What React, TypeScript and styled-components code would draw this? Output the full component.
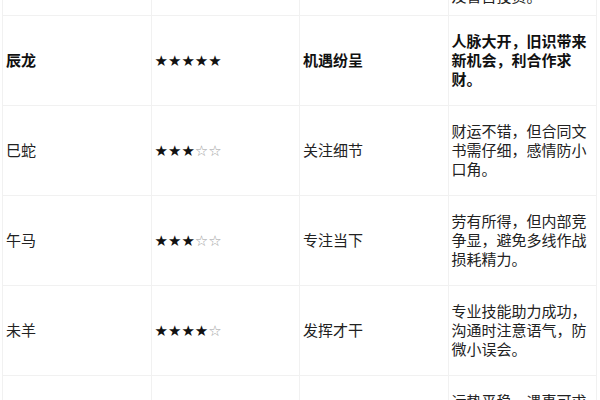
import React from 'react';
import styled, { createGlobalStyle } from 'styled-components';

const GlobalStyle = createGlobalStyle`
  html, body {
    margin: 0;
    padding: 0;
    background: #ffffff;
  }
`;

const Viewport = styled.div`
  width: 600px;
  height: 400px;
  overflow: hidden;
  padding-left: 2px;
  box-sizing: border-box;
  background: #ffffff;
`;

const Table = styled.table`
  width: 595px;
  margin-top: -68px;
  border-collapse: collapse;
  table-layout: fixed;
  font-family: 'Liberation Sans', 'Noto Sans CJK SC', sans-serif;
  font-size: 15px;
  line-height: 19px;
  color: #222222;
`;

const Row = styled.tr<{ $bold?: boolean }>`
  font-weight: ${({ $bold }) => ($bold ? 700 : 400)};
  color: ${({ $bold }) => ($bold ? '#111111' : '#222222')};
`;

const Cell = styled.td<{ $compact?: boolean }>`
  border: 1px solid #f1f1f1;
  padding: ${({ $compact }) => ($compact ? '16px 4px 9px 3px' : '16px 4px 16px 3px')};
  vertical-align: middle;
  text-align: left;
  word-break: break-all;
`;

const Stars = styled.span`
  font-family: 'DejaVu Sans', sans-serif;
  font-size: 15px;
  white-space: nowrap;
`;

const Star = styled.span<{ $on: boolean }>`
  color: ${({ $on }) => ($on ? '#111111' : '#a0a0a0')};
`;

interface Fortune {
  sign: string;
  rating: number;
  keyword: string;
  detail: string;
  bold?: boolean;
}

const rows: Fortune[] = [
  {
    sign: '卯兔',
    rating: 4,
    keyword: '稳中求进',
    detail: '贵人暗中相助，适合稳扎稳打，不宜冒进及盲目投资。'
  },
  {
    sign: '辰龙',
    rating: 5,
    keyword: '机遇纷呈',
    detail: '人脉大开，旧识带来新机会，利合作求财。',
    bold: true
  },
  {
    sign: '巳蛇',
    rating: 3,
    keyword: '关注细节',
    detail: '财运不错，但合同文书需仔细，感情防小口角。'
  },
  {
    sign: '午马',
    rating: 3,
    keyword: '专注当下',
    detail: '劳有所得，但内部竞争显，避免多线作战损耗精力。'
  },
  {
    sign: '未羊',
    rating: 4,
    keyword: '发挥才干',
    detail: '专业技能助力成功，沟通时注意语气，防微小误会。'
  },
  {
    sign: '申猴',
    rating: 4,
    keyword: '顺势而为',
    detail: '运势平稳，遇事可求助长辈，财运小有收获。'
  }
];

const Rating: React.FC<{ value: number }> = ({ value }) => (
  <Stars>
    {[0, 1, 2, 3, 4].map((i) => (
      <Star key={i} $on={i < value}>
        {i < value ? '★' : '☆'}
      </Star>
    ))}
  </Stars>
);

export default function App() {
  return (
    <>
      <GlobalStyle />
      <Viewport>
        <Table>
          <tbody>
            {rows.map((row, idx) => (
              <Row key={row.sign} $bold={row.bold}>
                <Cell $compact={idx === 0}>{row.sign}</Cell>
                <Cell $compact={idx === 0}>
                  <Rating value={row.rating} />
                </Cell>
                <Cell $compact={idx === 0}>{row.keyword}</Cell>
                <Cell $compact={idx === 0}>{row.detail}</Cell>
              </Row>
            ))}
          </tbody>
        </Table>
      </Viewport>
    </>
  );
}
